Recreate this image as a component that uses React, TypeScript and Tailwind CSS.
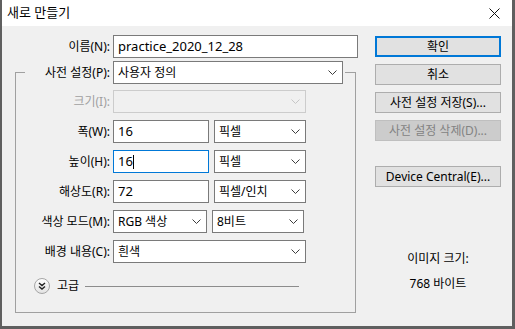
import type { ReactNode } from "react";

const font = "font-['Noto_Sans','Noto_Sans_CJK_KR',sans-serif]";

function Chevron({ disabled }: { disabled?: boolean }) {
  return (
    <svg width="9" height="5" viewBox="0 0 9 5" className="shrink-0">
      <path
        d="M0.5 0.5L4.5 4.5L8.5 0.5"
        fill="none"
        stroke={disabled ? "#c6c6c6" : "#3c3c3c"}
        strokeWidth="1"
      />
    </svg>
  );
}

function Select({ value, width, disabled }: { value?: string; width: string; disabled?: boolean }) {
  return (
    <div
      className={`${width} h-[23px] flex items-center justify-between pl-[4px] pr-[5px] text-[12px] border ${
        disabled ? "border-[#cccccc] bg-[#f0f0f0]" : "border-[#7a7a7a] bg-white"
      }`}
    >
      <span className="text-black">{value}</span>
      <Chevron disabled={disabled} />
    </div>
  );
}

function Input({ value, width, focused }: { value: string; width: string; focused?: boolean }) {
  return (
    <div
      className={`${width} h-[23px] flex items-center pl-[4px] text-[13px] text-black bg-white border ${
        focused ? "border-[#0078d7]" : "border-[#7a7a7a]"
      }`}
    >
      {value}
      {focused && <span className="w-px h-[14px] bg-black" />}
    </div>
  );
}

function Row({ label, disabled, children }: { label: string; disabled?: boolean; children: ReactNode }) {
  return (
    <div className="flex items-center">
      <span className={`w-[97px] pr-[3px] text-right text-[12px] ${disabled ? "text-[#a0a0a0]" : "text-black"}`}>
        {label}
      </span>
      <div className="flex gap-[5px]">{children}</div>
    </div>
  );
}

function Button({ children, primary, disabled }: { children: ReactNode; primary?: boolean; disabled?: boolean }) {
  return (
    <div
      className={`h-[21px] flex items-center justify-center text-[12px] ${
        primary
          ? "border-2 border-[#0078d7] bg-[#e1e1e1] text-black"
          : disabled
            ? "border border-[#bfbfbf] bg-[#cccccc] text-[#838383]"
            : "border border-[#adadad] bg-[#e1e1e1] text-black"
      }`}
    >
      {children}
    </div>
  );
}

export default function App() {
  return (
    <div className={`w-[515px] h-[329px] bg-[#5f5f5f] pl-[2px] pr-[3px] pb-[3px] flex flex-col ${font}`}>
      <div className="h-[26px] bg-white flex items-center justify-between pl-[5px] pr-[12px] shrink-0">
        <span className="text-[13px] text-black">새로 만들기</span>
        <svg width="11" height="11" viewBox="0 0 11 11">
          <path d="M0.5 0.5L10.5 10.5M10.5 0.5L0.5 10.5" stroke="#111" strokeWidth="1" />
        </svg>
      </div>

      <div className="flex-1 bg-[#f0f0f0] flex">
        <div className="w-[358px] pl-[13px] pt-[9px] flex flex-col gap-[3px]">
          <div className="flex items-center">
            <span className="w-[98px] pr-[3px] text-right text-[12px] text-black">이름(N):</span>
            <Input value="practice_2020_12_28" width="w-[245px]" />
          </div>

          <fieldset className="w-[341px] h-[252px] border border-[#a0a0a0] flex flex-col">
            <legend className="ml-[9px] pr-[2px] flex items-center">
              <span className="w-[88px] pr-[3px] text-right text-[12px] text-black">사전 설정(P):</span>
              <Select value="사용자 정의" width="w-[230px]" />
            </legend>

            <div className="mt-[6px] flex flex-col gap-[7px]">
              <Row label="크기(I):" disabled>
                <Select width="w-[193px]" disabled />
              </Row>
              <Row label="폭(W):">
                <Input value="16" width="w-[96px]" />
                <Select value="픽셀" width="w-[92px]" />
              </Row>
              <Row label="높이(H):">
                <Input value="16" width="w-[96px]" focused />
                <Select value="픽셀" width="w-[92px]" />
              </Row>
              <Row label="해상도(R):">
                <Input value="72" width="w-[96px]" />
                <Select value="픽셀/인치" width="w-[92px]" />
              </Row>
              <Row label="색상 모드(M):">
                <Select value="RGB 색상" width="w-[94px]" />
                <Select value="8비트" width="w-[92px]" />
              </Row>
              <Row label="배경 내용(C):">
                <Select value="흰색" width="w-[193px]" />
              </Row>
            </div>

            <div className="mt-[14px] ml-[18px] flex items-center">
              <svg width="16" height="16" viewBox="0 0 16 16" className="shrink-0">
                <defs>
                  <linearGradient id="adv" x1="0" y1="0" x2="0" y2="1">
                    <stop offset="0" stopColor="#ffffff" />
                    <stop offset="1" stopColor="#e2e2e2" />
                  </linearGradient>
                </defs>
                <circle cx="8" cy="8" r="7.5" fill="url(#adv)" stroke="#a5a5a5" />
                <path d="M5 5L8 7.5L11 5M5 8.5L8 11L11 8.5" fill="none" stroke="#222" strokeWidth="1.4" />
              </svg>
              <span className="ml-[7px] text-[12px] text-black">고급</span>
              <span className="ml-[6px] w-[214px] h-px bg-[#8c8c8c]" />
            </div>
          </fieldset>
        </div>

        <div className="ml-[15px] w-[126px] pt-[10px] flex flex-col">
          <Button primary>확인</Button>
          <div className="mt-[7px]">
            <Button>취소</Button>
          </div>
          <div className="mt-[7px]">
            <Button>사전 설정 저장(S)...</Button>
          </div>
          <div className="mt-[7px]">
            <Button disabled>사전 설정 삭제(D)...</Button>
          </div>
          <div className="mt-[25px]">
            <Button>Device Central(E)...</Button>
          </div>
          <div className="mt-[63px] flex flex-col items-center gap-[7px] text-[12px] text-black">
            <span>이미지 크기:</span>
            <span>768 바이트</span>
          </div>
        </div>
      </div>
    </div>
  );
}
